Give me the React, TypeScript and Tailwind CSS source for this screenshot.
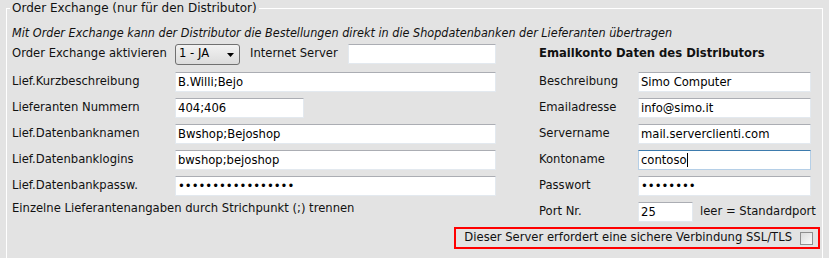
import { ReactNode } from 'react';

const inputBase =
  'h-[20px] bg-white border border-[#e3e9ef] border-t-[#abadb3] pl-[2px] text-[11.6px] text-black outline-none';

const Row = ({ label, children, labelWidth }: { label: string; children: ReactNode; labelWidth: string }) => {
  return (
    <div className="flex h-[20px] items-center">
      <div className={`${labelWidth} shrink-0`}>{label}</div>
      {children}
    </div>
  );
};

const TextField = ({ value, width, type = 'text' }: { value: string; width: string; type?: string }) => {
  return (
    <input
      type={type}
      defaultValue={value}
      className={`${inputBase} ${width} ${type === 'password' ? 'text-[10.8px]' : ''}`}
    />
  );
};

export default function App() {
  return (
    <div
      className="w-[829px] h-[258px] overflow-hidden bg-[#e3e3e3] text-[11.6px] text-[#111]"
      style={{ fontFamily: '"DejaVu Sans", Verdana, sans-serif' }}
    >
      <fieldset className="ml-[6px] mr-[6px] h-[300px] border border-white pl-[3px]">
        <legend className="px-[2px] text-[12px] leading-[16px] text-[#111]">Order Exchange (nur für den Distributor)</legend>

        <div className="pl-[2px]">
          <p
            className="mt-[9px] text-[12.5px] leading-[16px] italic font-stretch-condensed"
            style={{ fontFamily: '"DejaVu Sans Condensed", "DejaVu Sans", sans-serif' }}
          >
            Mit Order Exchange kann der Distributor die Bestellungen direkt in die Shopdatenbanken der Lieferanten übertragen
          </p>

          <div className="mt-[3px] flex">
            {/* linke Spalte */}
            <div className="flex w-[527px] flex-col gap-[6px]">
              <div className="mb-[2px] flex h-[20px] items-center">
                <div className="w-[163px] shrink-0">Order Exchange aktivieren</div>
                <div className="relative h-[21px] w-[65px] rounded-[3px] border border-[#707070] bg-gradient-to-b from-[#f2f2f2] to-[#dcdcdc]">
                  <select
                    defaultValue="1"
                    className="h-full w-full appearance-none bg-transparent pl-[3px] text-[11.6px] text-black outline-none"
                  >
                    <option value="0">0 - NEIN</option>
                    <option value="1">1 - JA</option>
                  </select>
                  <svg className="pointer-events-none absolute right-[5px] top-[8px]" width="7" height="4" viewBox="0 0 7 4">
                    <path d="M0 0h7L3.5 4z" fill="#000" />
                  </svg>
                </div>
                <div className="ml-[10px] w-[98px] shrink-0">Internet Server</div>
                <TextField value="" width="w-[148px]" />
              </div>
              <Row label="Lief.Kurzbeschreibung" labelWidth="w-[163px]">
                <TextField value="B.Willi;Bejo" width="w-[321px]" />
              </Row>
              <Row label="Lieferanten Nummern" labelWidth="w-[163px]">
                <TextField value="404;406" width="w-[129px]" />
              </Row>
              <Row label="Lief.Datenbanknamen" labelWidth="w-[163px]">
                <TextField value="Bwshop;Bejoshop" width="w-[321px]" />
              </Row>
              <Row label="Lief.Datenbanklogins" labelWidth="w-[163px]">
                <TextField value="bwshop;bejoshop" width="w-[321px]" />
              </Row>
              <Row label="Lief.Datenbankpassw." labelWidth="w-[163px]">
                <TextField value="bwshop12345678901" width="w-[321px]" type="password" />
              </Row>
              <p className="-mt-[2px] leading-[16px]">Einzelne Lieferantenangaben durch Strichpunkt (;) trennen</p>
            </div>

            {/* rechte Spalte */}
            <div className="flex flex-col gap-[6px]">
              <div className="mb-[2px] flex h-[20px] items-center font-bold">Emailkonto Daten des Distributors</div>
              <Row label="Beschreibung" labelWidth="w-[99px]">
                <TextField value="Simo Computer" width="w-[173px]" />
              </Row>
              <Row label="Emailadresse" labelWidth="w-[99px]">
                <TextField value="info@simo.it" width="w-[173px]" />
              </Row>
              <Row label="Servername" labelWidth="w-[99px]">
                <TextField value="mail.serverclienti.com" width="w-[173px]" />
              </Row>
              <Row label="Kontoname" labelWidth="w-[99px]">
                <div className="relative">
                  <input
                    defaultValue="contoso"
                    className="h-[20px] w-[173px] border border-[#b5cfe7] border-t-[#3d7bad] bg-white pl-[2px] text-[11.6px] text-black outline-none"
                  />
                  <span className="absolute left-[49px] top-[3px] h-[14px] w-px bg-black" />
                </div>
              </Row>
              <Row label="Passwort" labelWidth="w-[99px]">
                <TextField value="simo1234" width="w-[173px]" type="password" />
              </Row>
              <Row label="Port Nr." labelWidth="w-[99px]">
                <TextField value="25" width="w-[55px]" />
                <span className="ml-[7px]">leer = Standardport</span>
              </Row>
            </div>
          </div>

          <div className="mt-[5px] flex justify-end pr-[2px]">
            <label className="flex h-[22px] items-center gap-[8px] border-2 border-[#ff0000] pl-[8px] pr-[5px]">
              <span>Dieser Server erfordert eine sichere Verbindung SSL/TLS</span>
              <span className="block h-[13px] w-[13px] border border-[#8f8f8f] bg-gradient-to-br from-[#dcdcdc] to-[#fbfbfb]" />
            </label>
          </div>
        </div>
      </fieldset>
    </div>
  );
}
